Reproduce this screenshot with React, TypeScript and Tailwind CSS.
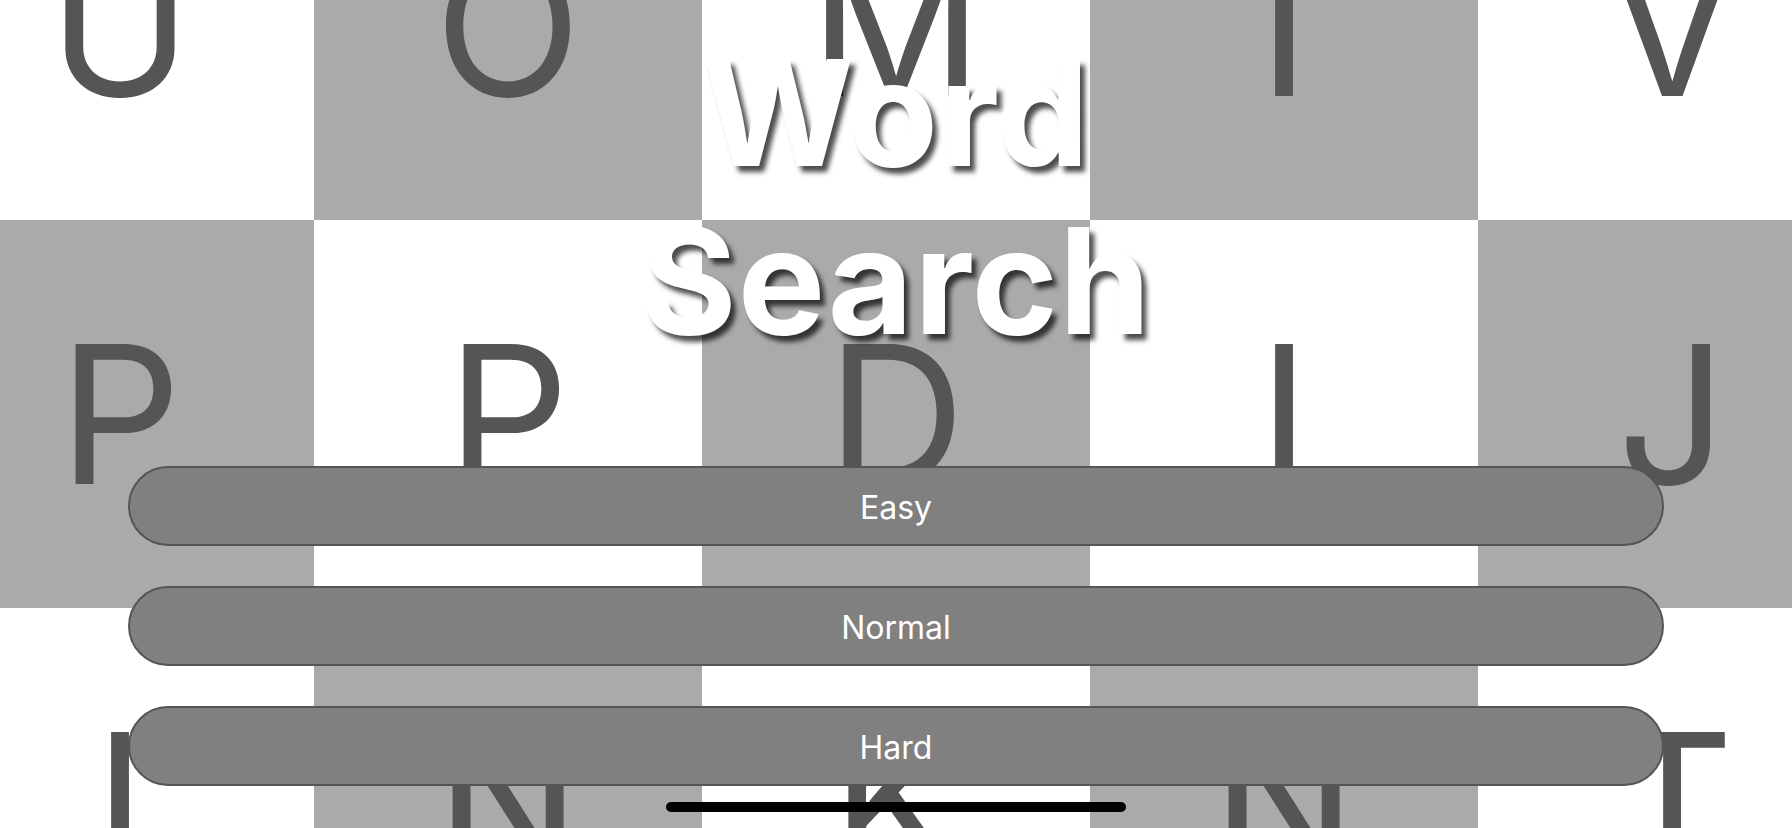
import React from "react";

const LETTERS: string[][] = [
  ["E", "R", "A", "S", "W"],
  ["U", "O", "M", "I", "V"],
  ["P", "P", "D", "I", "J"],
  ["I", "N", "K", "N", "T"],
  ["H", "C", "L", "E", "B"],
];

const LEVELS = ["Easy", "Normal", "Hard"];

function LetterGrid(): React.JSX.Element {
  return (
    <div className="absolute inset-0 flex items-center justify-center overflow-hidden">
      <div className="grid shrink-0 grid-cols-[repeat(5,388px)] grid-rows-[repeat(5,388px)]">
        {LETTERS.map((row, r) =>
          row.map((letter, c) => (
            <div
              key={`${r}-${c}`}
              className={`flex items-center justify-center text-[192px] leading-none text-[#555555] ${
                (r + c) % 2 === 0 ? "bg-[#aaaaaa]" : "bg-white"
              }`}
            >
              {letter}
            </div>
          ))
        )}
      </div>
    </div>
  );
}

export default function App(): React.JSX.Element {
  return (
    <div className="relative h-[828px] w-[1792px] overflow-hidden bg-white font-['Inter','Noto_Sans',sans-serif]">
      <LetterGrid />

      <div className="relative flex h-full flex-col items-center pt-[29px]">
        <h1 className="w-[600px] text-center text-[147px] font-bold leading-[168px] tracking-[1px] text-white [text-shadow:5px_6px_5px_rgba(0,0,0,0.7)]">
          Word Search
        </h1>

        <div className="mt-[101px] flex w-full flex-col gap-[40px] px-[128px]">
          {LEVELS.map((level) => (
            <button
              key={level}
              className="flex h-[80px] w-full items-center justify-center rounded-full border-2 border-[#555555] bg-[#808080] pt-[3px] text-[32px] text-white"
            >
              {level}
            </button>
          ))}
        </div>
      </div>

      <div className="absolute bottom-[16px] left-[666px] h-[10px] w-[460px] rounded-full bg-black" />
    </div>
  );
}
